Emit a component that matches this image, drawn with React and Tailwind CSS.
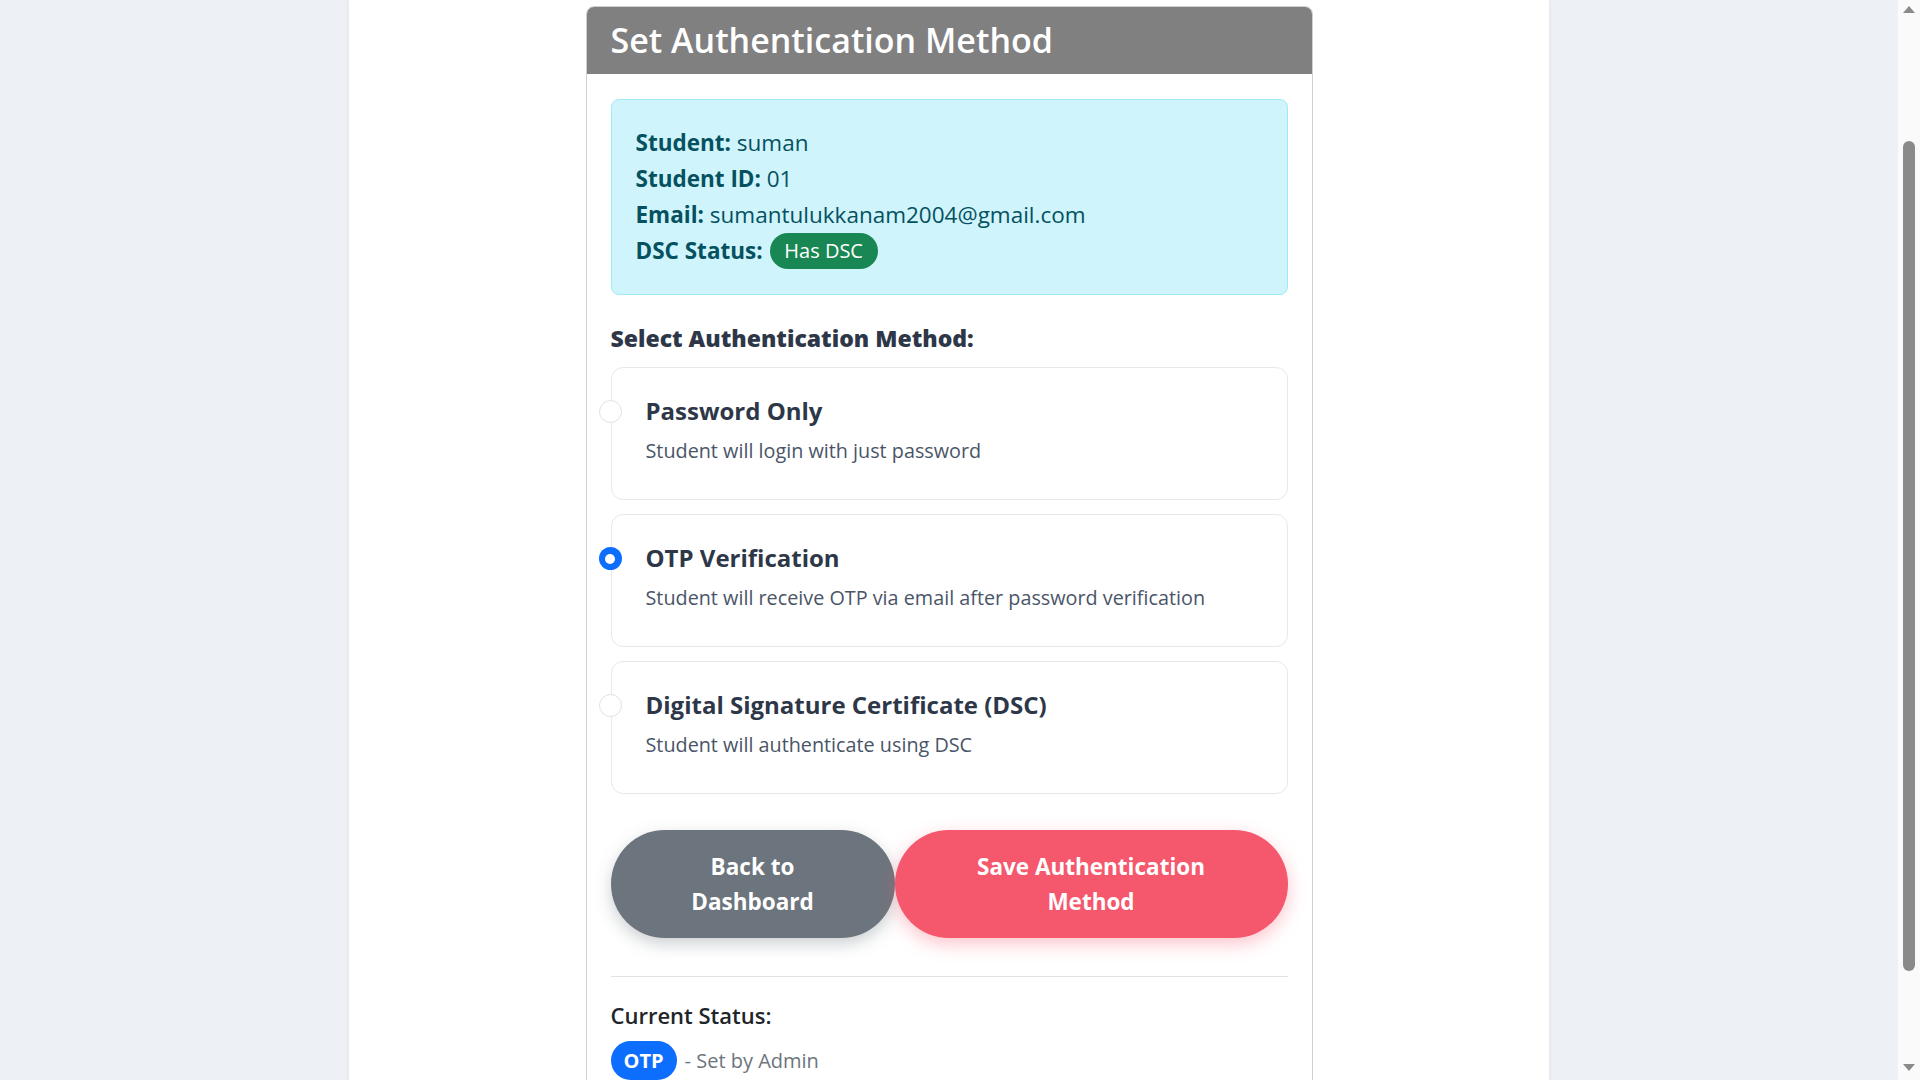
import React from "react";

function Radio({ checked }) {
  return checked ? (
    <span className="absolute left-[-13px] top-[32px] flex h-[23px] w-[23px] items-center justify-center rounded-full bg-[#0d6efd]">
      <span className="h-[10px] w-[10px] rounded-full bg-white" />
    </span>
  ) : (
    <span className="absolute left-[-13px] top-[32px] h-[23px] w-[23px] rounded-full border border-[#dee2e6] bg-white" />
  );
}

function Option({ title, desc, checked }) {
  return (
    <div className="relative h-[133px] rounded-[12px] border border-[#e6e8ec] bg-white pl-[34px] pt-[28px]">
      <Radio checked={checked} />
      <div className="text-[24px] font-bold leading-[30px] text-[#2d3748]">{title}</div>
      <div className="mt-[11px] text-[19.8px] leading-[27px] text-[#4a5568]">{desc}</div>
    </div>
  );
}

function Scrollbar() {
  return (
    <div className="relative flex w-[22px] shrink-0 flex-col items-center bg-[#fafafa]">
      <svg className="mt-[6px]" width="12" height="7" viewBox="0 0 12 7">
        <path d="M0 7 L6 0 L12 7 Z" fill="#8a8a8a" />
      </svg>
      <div className="mt-[128px] h-[830px] w-[12px] rounded-full bg-[#8a8a8a]" />
      <svg className="mt-[93px]" width="12" height="7" viewBox="0 0 12 7">
        <path d="M0 0 L6 7 L12 0 Z" fill="#8a8a8a" />
      </svg>
    </div>
  );
}

export default function App() {
  return (
    <div className="flex h-screen overflow-hidden bg-[#edf1f5] font-['Open_Sans','Noto_Sans',sans-serif]">
      <div className="flex-1 overflow-hidden">
        <div className="mx-auto min-h-[1240px] w-[1200px] bg-white pt-[6px] shadow-[0_0_6px_rgba(0,0,0,0.06)]">
          <div className="mx-auto w-[727px] rounded-t-[8px] border border-[#cfcfcf]">
            <div className="flex h-[67px] items-center rounded-t-[7px] bg-[#808080] px-[24px] pb-[2px]">
              <h1 className="text-[34px] font-semibold leading-none text-white">Set Authentication Method</h1>
            </div>
            <div className="px-[24px] pb-[40px] pt-[25px]">
              <div className="rounded-[8px] border border-[#9eeaf9] bg-[#cff4fc] px-[24px] pb-[25px] pt-[25px] text-[22.5px] leading-[36px] text-[#055160]">
                <div>
                  <span className="font-bold">Student:</span> suman
                </div>
                <div>
                  <span className="font-bold">Student ID:</span> 01
                </div>
                <div>
                  <span className="font-bold">Email:</span> sumantulukkanam2004@gmail.com
                </div>
                <div className="flex items-center">
                  <span className="font-bold">DSC Status:</span>
                  <span className="ml-[7px] flex h-[36px] w-[108px] items-center justify-center rounded-full bg-[#198754] text-[20px] font-medium leading-none text-white">
                    Has DSC
                  </span>
                </div>
              </div>

              <div className="mt-[28px] text-[23px] font-extrabold leading-[30px] text-[#2d3748]">
                Select Authentication Method:
              </div>

              <div className="mt-[14px] flex flex-col gap-[14px]">
                <Option title="Password Only" desc="Student will login with just password" />
                <Option
                  title="OTP Verification"
                  desc="Student will receive OTP via email after password verification"
                  checked
                />
                <Option
                  title="Digital Signature Certificate (DSC)"
                  desc="Student will authenticate using DSC"
                />
              </div>

              <div className="mt-[36px] flex">
                <button className="flex h-[108px] w-[284px] items-center justify-center rounded-full bg-[#6c757d] text-center text-[22.5px] font-bold leading-[35px] text-white shadow-[0_6px_16px_rgba(108,117,125,0.35)]">
                  Back to
                  <br />
                  Dashboard
                </button>
                <button className="flex h-[108px] flex-1 items-center justify-center rounded-full bg-[#f5576c] text-center text-[22.5px] font-bold leading-[35px] text-white shadow-[0_6px_18px_rgba(245,87,108,0.35)]">
                  Save Authentication
                  <br />
                  Method
                </button>
              </div>

              <div className="mt-[38px] border-t border-[#e2e2e2]" />

              <div className="mt-[23px] text-[22px] font-semibold leading-[30px] text-[#212529]">Current Status:</div>
              <div className="mt-[11px] flex items-center">
                <span className="flex h-[39px] items-center rounded-full bg-[#0d6efd] px-[13px] text-[20px] font-bold leading-none text-white">
                  OTP
                </span>
                <span className="ml-[8px] text-[20px] text-[#6c757d]">- Set by Admin</span>
              </div>
            </div>
          </div>
        </div>
      </div>
      <Scrollbar />
    </div>
  );
}
